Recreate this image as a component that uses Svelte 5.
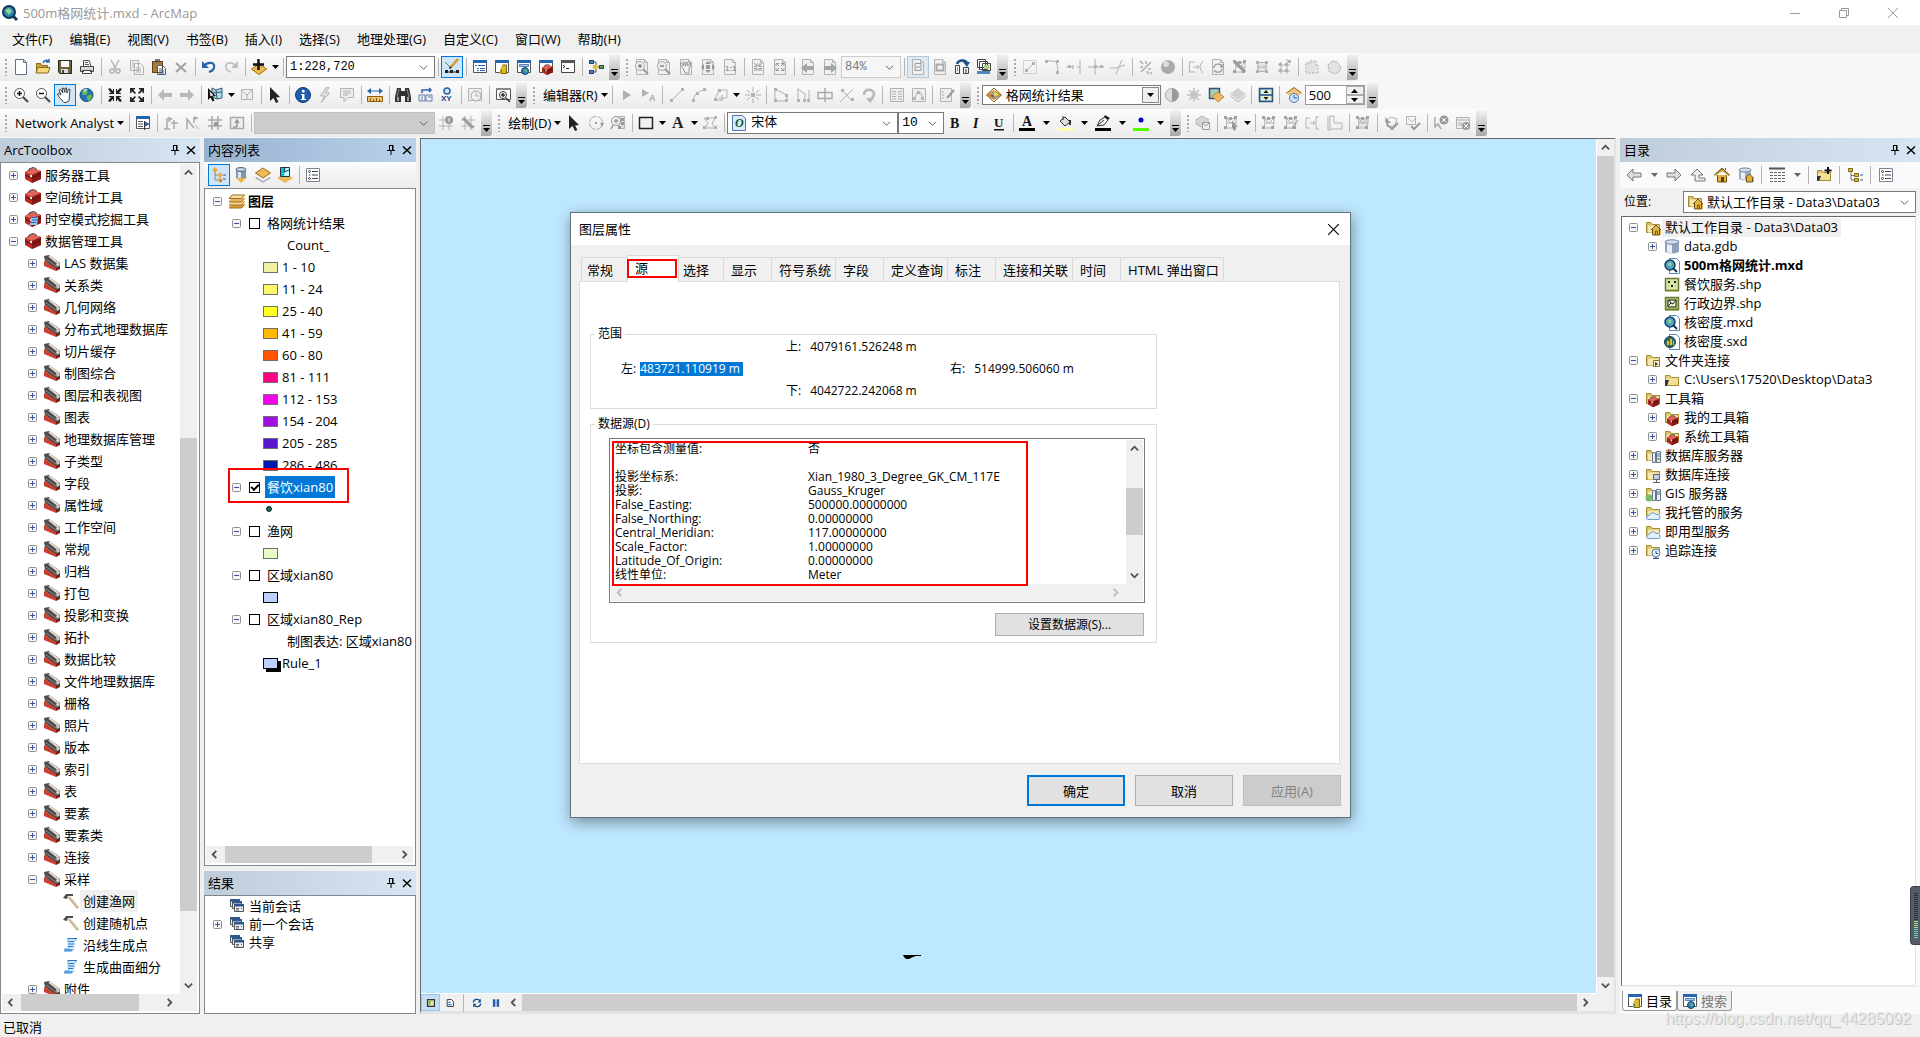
<script>
  const G = '#b2b2b2';
  const s = (d, c = G, w = 1) => `<path d="${d}" fill="none" stroke="${c}" stroke-width="${w}"/>`;
  const f = (d, c = G) => `<path d="${d}" fill="${c}"/>`;
  const page = f('M2.5.5h8l3 3v12h-11z', '#f0f0f0') + s('M2.5.5h8l3 3v12h-11zM10.500.5v3h3');
  const lens = (x) => `<circle cx="6.500" cy="6.500" r="5" fill="#fff" stroke="#555"/>` + s('M10 10l5 5', '#444', 2) + s('M4 6.500h5' + x, '#111', 1.500);
  const greyLens = (x) => page + `<circle cx="6" cy="7" r="4.500" fill="#eee" stroke="#aaa"/>` + s('M9 10l5 5', '#999', 2) + s('M4 7h4' + x, '#888', 1.500);
  const dots = (pts, c = G) => pts.map(([x, y]) => f(`M${x - 1} ${y - 1}h3v3h-3z`, c)).join('');
  const folder = f('M1 3h5l1.500 2H15v9H1z', '#e3c766') + f('M2 6h12v7H2z', '#f3df94') + s('M1.500 13.500v-10h4l2 2h7v8z', '#a58b35');
  const win = f('M1 2h14v12H1z', '#fff') + s('M1.500 2.500h13v11h-13z', '#555') + f('M1 1h14v3H1z', '#2564b0');
  const box = () => f('M0 5l7-4L16 4v8l-9 4-7-4z', '#b92b22') + f('M0 5l7-4L16 4 7 8z', '#df655a') + f('M7 8L16 4v8l-9 4z', '#861a14') + s('M4 4V2l4-1.500 3 1V3', '#444') + f('M5 8h2v3H5z', '#eee') + s('M0 8l7 3L16 7', '#5c0e0a');
  const globe = '<circle cx="7.500" cy="8" r="6.500" fill="#2373b5" stroke="#124a7c"/>' + f('M3 4l4-1 2 2-2 3-3 0zM8 9l4-2 1 3-3 4-2-2z', '#6fbb4a') + f('M4 3a5 5 0 0 1 5-1L6 5z', '#a8d8f5');
  const mxd = f('M5 .500h8l2.500 2.500v12.500H5z', '#fff') + s('M5.500.5h7l3 3v12h-10z', '#5a86b8') + '<circle cx="6" cy="7" r="5" fill="#4b9fc0" stroke="#16406b" stroke-width="1.500"/>' + f('M3 6l3-2 2 2-2 3z', '#8fd08e') + s('M9 10l4 4', '#17375c', 2);
  const mesh = s('M3 3l5 1 5-1v5l-1 5H3l1-5zM3 3l5 5 5-5M4 8h9') + dots([[2, 2], [7, 3], [12, 2], [2, 12], [11, 12]], '#a2a2a2');
  const fwin = (x) => f('M1 2h5l1.500 2H15v9H1z', '#dcc266') + s('M1.500 12.500v-10h4l2 2h7v8z', '#a58b35') + f('M3 5.500h11v7H3z', '#f7e9ae') + x;
  const layer = (c, y) => f(`M0 ${y}l8-5 8 5-8 5z`, c);
  const pane = (x, y) => f(`M${x} ${y}h10v8H${x}z`, '#e9edf2') + s(`M${x + 0.5} ${y + 0.5}h9v7h-9z`, '#555') + f(`M${x} ${y}h10v2.500H${x}z`, '#2f5788');

  const I = {
    new: f('M2.500.5h8l3 3v12h-11z', '#fff') + s('M2.500.5h8l3 3v12h-11zM10.500.5v3h3', '#607086'),
    open: f('M1 4h5l1 2h6v8H1z', '#c89d32') + f('M3 8h12l-2 6H1z', '#f6d877') + s('M1.500 14V4.500h4l2 2h5v2M3 8.500h12l-2 5.500H1z', '#8b6b1e') + s('M8 4c1-3 4-3 5-2M14 0v3h-3', '#2a65b0', 1.500),
    save: f('M1 1h14v14H3l-2-2z', '#6c6240') + f('M4 2h8v6H4z', '#f8f8f8') + f('M4 10h7v5H4z', '#ddd') + f('M5 11h2v3H5z', '#444') + s('M1.500 1.500h13v13H3l-1.500-2z', '#2f2b1a'),
    print: f('M1 7h14v6H1z', '#d8d8d8') + f('M4 1h7l2 6H3z', '#fff') + s('M1.500 7.500h13v5h-13zM4.500 7V1.500H10l2 5.500M3.500 11.500h9v3h-9z', '#444') + f('M5 12h6v2H5z', '#fff') + s('M6 3.500h3M6 5.500h4', '#555'),
    cut: s('M4 1l5 9M12 1L7 10', G, 1.500) + '<g fill="none" stroke="#b2b2b2" stroke-width="1.500"><circle cx="5" cy="12" r="2"/><circle cx="11" cy="12" r="2"/></g>',
    copy: f('M1 1h9v11H1z', '#eee') + s('M1.500 1.500h8v10h-8zM5.500 4.500h6l3 3v8h-9zM3 4h2M3 6h2M3 8h2M7 9h5M7 11h5M7 13h5'),
    paste: f('M1 2h11v12H1z', '#a87838') + f('M4 0h5v4H4z', '#777') + f('M6 6h6l3 3v6.500H6z', '#fff') + s('M1.500 2.500h10v11h-10z', '#5f4018') + s('M6.500 6.500h5l3 3v6h-8zM8 10h4M8 12h5M8 14h5', '#3e5d86'),
    del: s('M3 4l10 9M13 4L3 13', '#a2a2a2', 2),
    undo: s('M3 7c3-4 9-4 10-1s-1 6-5 7', '#2a62ad', 2.200) + f('M1 2v7h7z', '#2a62ad'),
    redo: s('M13 7C10 3 4 3 3 6s1 6 5 7', '#c0c0c0', 1.800) + f('M15 2v7H8z', '#c0c0c0'),
    add: f('M0 10l8-5 8 5-8 6z', '#eebb4d') + s('M.500 10l7.500-5 7.500 5-7.500 5.500z', '#a06d17') + s('M7.500 0v11M2 5.500h11', '#111', 2.500),
    edit: s('M2 13h4l4 0h4', '#222') + dots([[2, 12], [7, 12], [13, 12]], '#222') + s('M1 3l5 5 3-1', '#4c8d45') + s('M14 0L7 8', '#d39a2e', 2.500) + f('M6 7l-1 3 3-1z', '#222'),
    toc: win + s('M3 6.500h2M6 6.500h7M5 9.500h2M8 9.500h5M5 11.500h2M8 11.500h5', '#2b62a8'),
    cat: win + f('M8 6h5v9H6v-4z', '#dcb92f') + s('M8.500 6h4v8.500H7', '#7e6512') + f('M6 12l2-2v4z', '#468a3c'),
    search: win + f('M3 5h10v3H3z', '#a9c9e8') + s('M3.500 5.500h9v2h-9z', '#5a84b0') + '<circle cx="9" cy="12" r="3.500" fill="#3180b8" stroke="#15436f"/>' + f('M8 10l3 1-1 3z', '#84c15b'),
    tbx: win + '<g transform="translate(4 5) scale(.68)">' + box() + '</g>',
    py: f('M1 2h14v12H1z', '#fff') + s('M1.500 2.500h13v11h-13z', '#444') + f('M1 1h14v3H1z', '#555') + s('M3 6l2 1.500L3 9M6 9.500h3', '#222'),
    model: s('M4 3h4v10H4M8 8h5', '#555') + f('M1 1h5v4H1zM1 11h5v4H1z', '#3f7fd0') + f('M5 6h4l1 2-1 2H5z', '#e6bf39') + f('M11 6h5v4h-5z', '#5aa546') + s('M1.500 1.500h4v3h-4zM1.500 11.500h4v3h-4zM11.500 6.500h4v3h-4z', '#2a4360'),
    zin: lens('M6.500 4v5'), zout: lens(''),
    pan: f('M4 8L2 3l1.500-.500L6 6 5 1.500l1.500-.500L8 5.500V1l1.500 0L10 6l1.500-4 1.500.500L12.500 8l-.500 6-3 1.500H7L2 10 .500 7 2 6.500z', '#fff') + s('M4 8L2 3l1.500-.500L6 6 5 1.500l1.500-.500L8 5.500V1l1.500 0L10 6l1.500-4 1.500.500L12.500 8l-.500 6-3 1.500H7L2 10 .500 7 2 6.500z', '#444'),
    globe,
    fin: f('M1 2l2-1 3 3V2h1v5H2V6h2zM15 2l-2-1-3 3V2H9v5h5V6h-2zM1 14l2 1 3-3v2h1V9H2v1h2zM15 14l-2 1-3-3v2H9V9h5v1h-2z', '#222'),
    fout: f('M1 1h5v1.500H4L7 6 6 7 2.500 4v2H1zM15 1h-5v1.500h2L9 6l1 1 3.500-3v2H15zM1 15h5v-1.500H4L7 10 6 9l-3.500 3v-2H1zM15 15h-5v-1.500h2L9 10l1-1 3.500 3v-2H15z', '#222'),
    back: f('M1 8l6-6v4h8v4H7v4z', '#b8b8b8'), fwd: f('M15 8L9 2v4H1v4h8v4z', '#b8b8b8'),
    selfeat: f('M5 1l4 2 6-2v10l-5 1-5-1z', '#9be3f0') + s('M5 1l4 2 6-2v10l-5 1-5-2zM9 3l1 9M5 6l10-1', '#456') + f('M1 1l8 8-3.500.500 2 4-2 1-2-4L1 13z', '#111') + f('M2.500 4l4 4.500L3.500 9z', '#fff'),
    clrsel: f('M2 2h12v11H2z', '#eee') + s('M2.500 2.500h11v10h-11zM2 3l6 5 5-5M8 8v4'),
    arrow: f('M3 0l10 10-4 .500 2.500 4.500-2.500 1-2.500-5L3 14z', '#222'),
    info: '<circle cx="8" cy="8" r="7.500" fill="#1f5fae" stroke="#0d3b78"/>' + f('M7 3h2.500v2.500H7zM6 7h3.500v5H11v1H6v-1h1V8H6z', '#fff'),
    bolt: f('M9 0L3 9h4l-3 7 9-10H8.500L12 0z', '#e2e2e2') + s('M9.500.5L3.500 9H8l-4 6.500 8.500-9.500H8.500l3.500-5.500z'),
    popup: f('M2 2h13v9H9l-4 4v-4H2z', '#eee') + s('M1.500 1.500h13v9H9l-4 4v-4H1.500zM4 4h8M4 6h8M4 8h5'),
    measure: f('M0 9h16v6H0z', '#f0c36d') + s('M.500 9.500h15v5H.500zM3.500 11v3M6.500 12v2M9.500 11v3M12.500 12v2', '#8d5d14') + s('M2 4h12', '#2a62ad') + f('M0 4l4-3v6zM16 4l-4-3v6z', '#2a62ad'),
    binoc: f('M2 1h4v3h4V1h4l2 9v5h-6V9H6v6H0v-5z', '#333') + f('M2 10h2v4H2zM12 10h2v4h-2z', '#9a9a9a') + s('M4 2L2 10M12 2l2 8', '#888'),
    route: s('M2 8h6v6H2zM9 8h6v6H9zM4 10h2M11 10h3M4 12h2', '#5f7fa6') + s('M5 6V3h9M12 1l2 2-2 2', '#2a62ad', 1.500),
    xy: '<circle cx="8" cy="4" r="3" fill="#cfe4f7" stroke="#2a62ad" stroke-width="1.500"/><text x="2" y="14" font-size="8" font-weight="bold" font-family="Liberation Sans" fill="#174a8c">XY</text>',
    time: f('M1 1h13v13H1z', '#eee') + s('M1.500 1.500h13v12h-13z') + '<circle cx="9" cy="9" r="5" fill="#eee" stroke="#aaa"/>' + s('M9 6v3h3'),
    viewer: f('M1 1h14v11H1z', '#fff') + s('M1.500 1.500h14v11h-14z', '#555') + f('M1 1h15v2H1z', '#888') + '<circle cx="8" cy="8" r="3.500" fill="#fff" stroke="#333"/>' + s('M6 8h4M8 6v4M11 11l4 4', '#333', 1.500),
    lzin: greyLens('M6 5v4'), lzout: greyLens(''),
    lpan: page + s('M5 9L2 5l1-1 3 3-1-4h1l2 4V3h1l1 4 2-3 1 1-2 5v4H7z', '#999'),
    lfull: page + f('M8 2l3 3H5zM8 14l3-3H5zM1 8l3-3v6zM15 8l-3-3v6zM6 6h4v4H6z', '#999'),
    l11: page + '<text x="3" y="12" font-size="8" font-weight="bold" font-family="Liberation Sans" fill="#999">1:1</text>',
    lfin: page + s('M4 4l3 3M12 4L9 7M4 12l3-3M12 12L9 9M7 4.500v3H4M9 4.500v3h3M7 12V9.500H4M9 12V9.500h3', '#999'),
    lfout: page + s('M4 4l3 3M12 4L9 7M4 12l3-3M12 12L9 9M4 7V4.500h3M12 7V4.500H9M4 9v2.500h3M12 9v2.500H9', '#999'),
    lback: page + f('M1 9l6-5v3h7v4H7v3z', '#a4a4a4'), lfwd: page + f('M15 9L9 4v3H2v4h7v3z', '#a4a4a4'),
    draft: page + s('M5 4.500h6v7H5zM6 8h4', '#999'),
    focus: page + s('M4.500 5.500h7v6h-7z', '#aaa', 2),
    chgl: s('M3 5c1-4 8-5 10-1', '#1d5288', 2.500) + f('M9 3h7l-3 5z', '#1d5288') + f('M1 6h5v9H1zM9 8h6v7H9z', '#eee') + s('M1.500 6.500h4v8h-4zM9.500 8.500h5v6h-5zM3 9h1M3 11h1M11 11h2M11 13h2', '#444'),
    ddp: f('M1 1h9v8H1z', '#fff') + s('M1.500.5h8v8h-8zM3.500 2.500h8v8h-8zM6.500 4.500h8v7h-8z', '#444') + f('M8 6h5v4H8z', '#a8ce8c') + f('M1 12h13v3H1z', '#4f86c6'),
    e1: `<path d="M1.500 1.500h13v13h-13z" fill="none" stroke="#b2b2b2" stroke-dasharray="1 1"/>` + s('M4 12l8-8') + dots([[4, 11], [11, 4]]),
    e2: s('M3 2h8q3 3 3 12') + dots([[2, 2], [13, 2], [13, 13]]),
    e3: s('M0 8h8M6 6l2 2-2 2M14 1v14M11 8h3') + dots([[3, 7]]),
    e4: s('M0 8h16M7 0v16') + dots([[7, 7], [13, 7]]),
    e5: s('M0 9h6l9-3M12 1L6 15'),
    e6: s('M3 13l10-10M2 2l3 3M13 10l-3 0M9 12l1 3M2 8h3M8 2v3M12 13l2 2', '#aaa', 1.500),
    e7: '<circle cx="8" cy="8" r="7" fill="#aaa"/><circle cx="6" cy="5" r="3" fill="#dcdcdc"/>',
    e8: s('M1.500 3v10M1 3h6M1 13h6M15 2q-6 6 0 12M5 8h6M9 6l2 2-2 2'),
    e9: page + s('M4 9c0-5 7-5 8-1M10 8h3V5M12 10c0 4-7 4-8 1', '#a2a2a2', 1.500),
    e10: mesh + s('M3 3l10 10', '#999', 3),
    e11: f('M3 4h10v8H3z', '#e4e4e4') + s('M3 3.500h10M3 8h10M3 12.500h10M4 3v10M12 3v10') + dots([[3, 3], [12, 3], [3, 12], [12, 12]]),
    e12: s('M2 6h12M2 12h12M5 3v12M11 0v15') + dots([[4, 5], [10, 5], [4, 11], [10, 11], [13, 2]]),
    e13: f('M3 4l5-2 5 3v6l-4 3H3z', '#e2e2e2') + `<path d="M2 4h4V2h6v4h2v8H2z" fill="none" stroke="#aaa" stroke-dasharray="2 1"/>`,
    e14: `<path d="M2 6l4-4 5 1 4 5-2 5-5 2-5-3z" fill="#e2e2e2" stroke="#aaa" stroke-dasharray="2 1"/>`,
    play: f('M4 3v10l8-5z', '#b0b0b0'),
    playA: f('M1 2v8l7-4z', '#b0b0b0') + '<text x="8" y="14" font-size="9" font-weight="bold" font-family="Liberation Sans" fill="#aaa">A</text>',
    line: s('M2 14L14 2') + dots([[2, 13], [13, 2]]),
    arc: s('M2 14q1-9 11-11') + dots([[2, 13], [6, 6], [13, 2]]),
    trace: s('M2 13L6 3h8v8M2 13h8M9 8v6M6 11h7') + dots([[2, 12], [6, 3]]),
    burst: s('M8 0v5M8 11v5M0 8h5M11 8h5M2 3l3 3M14 3l-3 3M2 13l3-3M14 13l-3-3', G, 1) + f('M6 6h4v4H6z'),
    v1: s('M2 2v12h12V8L2 2') + dots([[2, 2], [2, 13], [13, 13], [13, 8]]),
    v2: s('M3 1v14M3 2l7 5v7M14 3v12') + dots([[3, 13], [9, 13], [13, 13]]),
    v3: s('M1 5.500h14v6H1zM8 1v14', '#aaa', 1.500),
    v4: s('M1 15L14 2M4 4l8 9') + dots([[3, 3], [13, 12]]),
    v5: s('M3 8c0-8 11-6 10 0-1 3-3 3-4 6', '#b8b8b8', 2.500) + f('M5 11h8l-4 5z', '#b8b8b8'),
    tab: f('M1 1h14v14H1z', '#eee') + s('M1.500 1.500h13v13h-13zM3 4.500h4M3 7h4M3 9.500h4M3 12h4M9 4.500h4M9 7h4M9 9.500h4M9 12h4'),
    sketch: f('M1 1h14v14H1z', '#eee') + s('M1.500 1.500h13v13h-13zM4 12l2-6h4l2 6') + dots([[3, 11], [11, 11], [7, 5]]),
    tmpl: f('M1 1h11v14H1z', '#eee') + s('M1.500 1.500h11v13h-11zM3 5h2M3 8h2M3 11h2') + s('M15 3l-7 8', '#999', 2),
    lyr: layer('#d9922b', 8) + f('M3 8l5-3.500L13 8l-5 3.500z', '#5bb0dd') + f('M8 4.500L13 8l-5 1z', '#f7e04d') + f('M3 8l5 0 0 3.500z', '#d8452f') + s('M.500 8L8 1l7.500 7L8 15z', '#8d5a17'),
    contrast: '<circle cx="8" cy="8" r="6.500" fill="#ddd" stroke="#aaa"/>' + f('M8 1.500a6.500 6.500 0 0 1 0 13z', '#999'),
    sun: '<circle cx="8" cy="8" r="4" fill="#c4c4c4"/>' + s('M8 1v3M8 12v3M1 8h3M12 8h3M3 3l2 2M11 11l2 2M13 3l-2 2M5 11l-2 2', '#c4c4c4', 1.500),
    transp: f('M1 1h11v11H1z', '#a9cdb4') + s('M1.500 1.500h10v10h-10z', '#35507a', 1.500) + f('M4 9l6-4 6 5-6 5z', '#eab765') + s('M4 9l6-4 6 5-6 5z', '#c08e3d'),
    diam: f('M0 7l8-6 8 6-8 6z', '#d2d2d2') + s('M.500 9L8 15l7.500-6'),
    swipe: f('M1 1h14v14H1z', '#a6d3f0') + s('M1.500 1.500h13v13h-13z', '#2b5080', 1.500) + f('M3 3h10v4H3zM3 9h10v4H3z', '#e8f2c8') + s('M1 8h14', '#2b5080', 1.500) + f('M8 3l2.500 3h-5zM8 13l2.500-3h-5z', '#111'),
    flick: f('M0 6l8-6 8 6-8 6z', '#eec27e') + s('M.500 6L8 .500 15.500 6', '#a06d17') + '<circle cx="8" cy="11" r="4.500" fill="#cfe4f7" stroke="#4b7db0"/>' + s('M8 8v3h3', '#2a62ad'),
    nawin: win + s('M3 6.500h5M3 9h5M3 11.500h5', '#555') + f('M9 6l6 3-6 3z', '#2a62ad') + s('M9.500 6v9', '#333'),
    n1: s('M1 14h6M4 3v11M8 8h7M11 5v9M6 2v5', '#aaa', 1.500) + f('M6 2l4 2-4 2z', '#aaa'),
    n2: s('M1 3l8 10M2 14V4M9 2v6', '#aaa', 1.500) + f('M9 1l5 2-5 2z', '#aaa') + s('M10 10l4 4'),
    n3: s('M1 5h14M1 11h14M5 1v14M11 1v14', '#aaa', 1.500) + f('M7 7h4v4H7z', '#999'),
    n4: f('M1 2h14v12H1z', '#eee') + s('M1.500 2.500h13v11h-13z', '#aaa', 1.500) + s('M8 12V6M6 8l2-3 2 3M4 12h4', '#999', 1.500),
    n5: s('M1 5h14M1 11h14M5 1v14M11 1v14') + '<circle cx="11" cy="5" r="4" fill="#999"/>' + f('M10.500 3h1v4h-1z', '#fff'),
    n6: s('M1 5h14M1 11h14M5 1v14M11 1v14') + s('M3 3l10 10', '#999', 3),
    rot: '<circle cx="8" cy="8" r="6.500" fill="none" stroke="#aaa" stroke-dasharray="9 1.500"/>' + f('M7 7h2v2H7zM12 8h4l-2 4z', '#999'),
    zsel: f('M8 1h7v13H8z', '#ddd') + s('M8.500 1.500h6v12h-6z') + '<circle cx="6" cy="6" r="4.500" fill="#eee" stroke="#999"/>' + s('M4 6h4M6 4v4M3 10l-2 4', '#999', 1.500) + dots([[12, 4], [12, 8], [9, 12]], '#999'),
    rect: f('M1 2h14v12H1z', '#f2f2f2') + s('M1.500 2.500h13v11h-13z', '#222', 1.500),
    A: '<text x="2" y="13" font-size="16" font-weight="bold" font-family="Liberation Serif" fill="#222">A</text>',
    vert: s('M2 3h6l5 0-3 6 4 4H3l3-5z') + dots([[2, 12], [13, 12], [13, 2], [5, 3]]),
    B: '<text x="3" y="13" font-size="14" font-weight="bold" font-family="Liberation Serif" fill="#111">B</text>',
    It: '<text x="4" y="13" font-size="14" font-weight="bold" font-style="italic" font-family="Liberation Serif" fill="#111">I</text>',
    U: '<text x="3" y="12" font-size="13" font-weight="bold" font-family="Liberation Serif" fill="#111">U</text>' + f('M3 14h10v1.500H3z', '#111'),
    cA: '<text x="3" y="11" font-size="14" font-weight="bold" font-family="Liberation Serif" fill="#111">A</text>' + f('M0 13h16v3H0z', '#000'),
    cFill: f('M3 6l5-4 5 5-5 4z', '#ddd') + s('M3 6l5-4 5 5-5 4zM6 5V1', '#333') + s('M13 5v5', '#333', 2) + f('M0 13h16v3H0z', '#ffffb4'),
    cPen: s('M2 11l3-6 5-3 3 3-4 5zM3 10l6-5', '#333') + f('M10 0l5 3-2 2-4-3z', '#222') + f('M0 13h16v3H0z', '#000'),
    cDot: '<circle cx="8" cy="5" r="2.500" fill="#0000d8"/>' + f('M0 13h16v3H0z', '#55ff00'),
    t1: f('M0 5l7-4 7 4v4l-7 4-7-4z', '#d6d6d6') + s('M.500 5L7 1l7 4M.500 8l6 4') + f('M7 7h8v8H7z', '#eee') + s('M7.500 7.500h7v7h-7zM8 8l3 3 3-3', '#999'),
    t2: mesh + f('M9 6l6 6h-3l1 3-2 1-1-3-1 1z', '#999'),
    mesh, t4: mesh + s('M8 14l7-9', '#999'),
    t5: s('M1 3v10M1 3h4M1 13h4M5 8h5M8 6l2 2-2 2M14 2h-3v12h3'),
    t6: s('M3 1h4v7h8v6H3z') + s('M1 1v14h3'),
    t7: f('M3 3h10v10H3z', '#e4e4e4') + mesh,
    t8: s('M2 6l6-4 6 2-2 6-5 2z') + f('M2 2l6 6H5l1 4-2 0z', '#999') + s('M6 11l3 3 6-6', '#999', 2),
    t9: s('M1.500 1.500h9v8h-9zM3 3l4 4 3-3') + s('M6 11l3 3 6-6', '#999', 2),
    t10: s('M2 2v10l3-3 3 5', '#aaa', 1.500) + '<circle cx="11" cy="5" r="4.500" fill="#999"/>' + s('M9 3l4 4M13 3L9 7', '#fff'),
    t11: f('M1 2h13v12H1z', '#eee') + s('M1.500 2.500h13v11h-13zM1 5h14M3 8h4M3 10h4') + '<circle cx="11" cy="11" r="4" fill="#999"/>' + s('M9 9l4 4M13 9l-4 4', '#fff'),
    // contents panel
    cDraw: s('M4 4v9h6M4 8h5', '#888') + f('M1 3l3-3 3 3-3 3zM6 8l3-3 3 3-3 3zM6 13l3-3 3 3-3 3z', '#e3ae51') + s('M12 8h3M12 12h3M9 14h2', '#2a62ad'),
    cSrc: f('M2 10h12l-6 6z', '#e9b34a') + f('M3 2h10v9H3z', '#8196b3') + f('M5 2h3v9H5z', '#dce6f2') + '<ellipse cx="8" cy="2.500" rx="5" ry="2" fill="#c6d3e4" stroke="#50627c"/>',
    cVis: layer('#aeb4b8', 11) + layer('#f5f5f5', 9) + layer('#edba57', 6) + s('M.500 6L8 1l7.500 5L8 11z', '#9c6d1b'),
    cSel: layer('#edba57', 11) + f('M3 0h10v10H3z', '#bff') + f('M4 1h4l-1 8H4z', '#14b9d6') + s('M3.500.5h9v9h-9zM8 1L7 5l5-2', '#234'),
    opts: f('M1 1h14v14H1z', '#fff') + s('M1.500 1.500h13v13h-13z', '#7a8591') + s('M7 4.500h6M7 8h6M7 11.500h6', '#445') + '<g fill="none" stroke="#445"><circle cx="4.500" cy="4.500" r="1"/><circle cx="4.500" cy="11.500" r="1"/></g>' + f('M4 7.500h1.500v1H4z', '#445'),
    layers: f('M0 14l3-3h13l-3 4H0z', '#d99b35') + f('M0 11l3-3h13l-3 4H0z', '#f5d795') + f('M0 8l3-3h13l-3 4H0z', '#e6b457') + f('M0 5l3-3h13l-3 4H0z', '#f8dea4') + s('M0 5.500l3-3.500h12.500l-3 3.500zM0 9h12.500l3-3.500M0 12h12.500l3-3.500M0 15h12.500l3-3.500', '#a06f20'),
    // trees
    toolbox: box(),
    toolboxS: box() + f('M6 6h7l-1 8H4l2-3z', '#8cc4f0') + s('M6 6.500h6M7 9h5M6 11.500h5', '#2a6ab0'),
    toolset: f('M0 6l12 5v5L0 11z', '#c8402f') + f('M0 6l4-1 9 6-1 1z', '#ea7f70') + f('M12 11l4-1v4l-4 2z', '#7d1d15') + f('M0 1l5-1 11 8v4l-4 1L1 6z', '#4b4b4b') + s('M5 1l10 8', '#e6ddd0', 2) + s('M2 4l10 7', '#8c8c8c') + f('M12 9l3-1 1 2-3 2z', '#d8cdbb'),
    hammer: s('M6 4l9 11', '#b99f77', 2.500) + s('M6.500 4l8 10', '#efe2c8', 1) + f('M0 5l3-4 7 0 0 2-5 0-1 3z', '#4f4f4f'),
    script: f('M4 1h10l-1 3h-1l-1 9-3 2H1l1-4h3z', '#8ec5f2') + f('M6 2h6l-1 10H6z', '#cfe8fc') + s('M5 1.500h9M6 4.500h5M6 7h5M5 9.500h5M1 13h8', '#2d72bb', 1.200),
    session: pane(1, 1) + pane(3, 3) + pane(5, 6) + s('M7 10.500h3M7 12h3M12 10.500h1', '#666'),
    house: fwin(f('M6 10l5-5 5 5v5H7v-5z', '#e3b843') + s('M6 10l5-5 5 5M7.500 9v6h7V9M10.500 15v-4h2v4', '#6f531a')),
    gdb: f('M1 3h14v10q-7 3-14 0z', '#8fa3bd') + f('M3 3h5v11.500l-5-1z', '#e8eef6') + '<ellipse cx="8" cy="3" rx="7" ry="2.200" fill="#d4deeb" stroke="#6d819d"/>',
    mxd,
    shpPt: f('M1 1h14v14H1z', '#d6e3a0') + s('M1.500 1.500h13v12h-13z', '#68793a', 1.500) + f('M4 4h2v2H4zM10 4h2v2h-2zM7 8h2v2H7z', '#222'),
    shpPg: f('M1 1h14v14H1z', '#b9cb74') + s('M1.500 1.500h13v12h-13z', '#68793a', 1.500) + f('M4 4h8v7H4z', '#eef4d0') + s('M4 4h8v7H4zM4 10l3-3 2 1 3-4M7 7l-2-3', '#222'),
    sxd: f('M5 .500h8l2.500 2.500v12.500H5z', '#fff') + s('M5.500.5h7l3 3v12h-10z', '#5a86b8') + '<circle cx="6" cy="8" r="5.500" fill="#2e6f5a" stroke="#163c55"/>' + f('M3 7h2v4H3zM6 5h2v6H6zM9 7h1v4H9z', '#e8c23c'),
    fcon: fwin(f('M8 7h6v7H8z', '#fbf3cf') + s('M8.500 7.500h6v6h-6z', '#8b7328') + f('M10 9l3 2-3 2z', '#333')),
    fold: folder + f('M1 8h4l-2 6H1z', '#333'),
    ftbx: fwin('<g transform="translate(3 5) scale(.7)">' + box() + '</g>'),
    fserv: fwin(f('M7 4h8v11H7z', '#e5ecf4') + s('M7.500 4.500h3v10h-3zM11.500 3.500h4v11h-4zM12 6h3M12 8h3', '#64748b') + f('M12.500 10h2v2h-2z', '#4ea63e')),
    fdb: fwin(f('M8 7h7v6H8z', '#c3cfde') + s('M8.500 7.500h6v5h-6zM11.500 13v2M8 15.500h7', '#55657c')),
    fgis: fwin(f('M7 4h8v11H7z', '#e5ecf4') + s('M7.500 4.500h3v10h-3zM11.500 3.500h4v11h-4zM12 6h3M12 8h3', '#64748b') + '<circle cx="4" cy="12" r="3.500" fill="#7cb86b"/>'),
    fcloud: fwin(f('M3 15a3 3 0 0 1 1-5 4 4 0 0 1 7-1 3 3 0 0 1 3 6z', '#e3f0fb') + s('M3 14.500a2 2 0 0 1 1-4 4 4 0 0 1 7-1 3 3 0 0 1 3 5z', '#6e9bc4')),
    ftrack: fwin('<circle cx="11" cy="10" r="4" fill="#e3f0fb" stroke="#4b7db0"/>' + s('M11 8v2.500h2M11 14v2M8 15.500h6', '#345')),
    // catalog toolbar
    cback: f('M1 8l6-6v4h8v4H7v4z', '#ddd') + s('M1 8l6-6v4h8v4H7v4z', '#777'),
    cfwd: f('M15 8L9 2v4H1v4h8v4z', '#ddd') + s('M15 8L9 2v4H1v4h8v4z', '#777'),
    cup: f('M7 2l6 6H9v3h6v3H5V8H1z', '#eee') + s('M7 2l6 6H9v3h6v3H5V8H1z', '#777'),
    home: f('M3 8h10v7H3z', '#e2b23e') + f('M0 8l8-7 8 7-1 1-7-5-7 5z', '#c1912b') + s('M3.500 8v7h9V8M.500 8L8 1l7.500 7M11.500 3V1', '#6f531a') + f('M7 10h3v5H7z', '#5b4012'),
    hdb: f('M1 3h12v9q-6 3-12 0z', '#9db0c8') + f('M3 3h4v10l-4-1z', '#e8eef6') + '<ellipse cx="7" cy="3" rx="6" ry="2" fill="#d4deeb" stroke="#6d819d"/>' + f('M7 11l4-4 5 4v4H8v-4z', '#dfb03f') + s('M7 11l4.500-4 4 4M8.500 11v4h6v-4', '#6f531a'),
    list: s('M0 1.500h16', '#555', 2) + `<path d="M1 5.500h15M1 8.500h15M1 11.500h15M1 14.500h15" stroke="#666" stroke-dasharray="3 1" fill="none"/>`,
    fadd: folder + f('M1 9h4l-2 5H1z', '#333') + s('M12 0v7M8.500 3.500h7', '#111', 2),
    ctree: s('M4 5v8h4M4 8.500h4', '#777') + f('M1 1h5v4H1zM7 6h5v4H7zM7 11h5v4H7z', '#d9b845') + s('M1.500 1.500h4v3h-4zM7.500 6.500h4v3h-4zM7.500 11.500h4v3h-4z', '#7f671c') + s('M13 8h3M13 13h3', '#2a62ad'),
    dview: f('M2 2h12v12H2z', '#dfe9b8') + s('M2.500 2.500h11v11h-11z', '#333', 2) + f('M4 4l5 0-3 8H4z', '#8fb94e'),
    lview: f('M3 2h8l3 3v9H3z', '#fff') + s('M3.500 2.500h7l3 3v8h-10z', '#333', 1.500) + s('M5 7h4M5 10.500h6', '#3f7fd0', 2),
    refresh: s('M2 7c1-6 9-6 11-2M14 9c-1 6-9 6-11 2', '#124a8c', 2) + f('M14 1v6H9zM2 15V9h5z', '#124a8c'),
    pause: f('M3 2h4v12H3zM9 2h4v12H9z', '#1f5fae'),
    app: '<circle cx="7" cy="7" r="6" fill="#2a86a8" stroke="#123a5c" stroke-width="2"/>' + f('M3 5l4-2 3 3-3 4-2-2z', '#8fd08e') + s('M11 11l4 4', '#123a5c', 3),
  };

  const split = (t) => t.split(' ').map((k) => (k.endsWith('>>') ? { i: k.slice(0, -2), a: 2 } : k.endsWith('>') ? { i: k.slice(0, -1), a: 1 } : { i: k }));
  const menus = ['文件(F)', '编辑(E)', '视图(V)', '书签(B)', '插入(I)', '选择(S)', '地理处理(G)', '自定义(C)', '窗口(W)', '帮助(H)'];
  const toolRows = [
    [
      [...split('new open save print | cut copy paste del | undo redo | add> |'), { sel: '1:228,720', c: 'scale', l: '比例' }, ...split('| *edit | toc cat search tbx py | model')],
      [...split('lzin lzout lpan lfull l11 | lfin lfout | lback lfwd'), { sel: '84%', c: 'pct', l: '缩放', off: true }, ...split('| *draft focus chgl ddp')],
      split('e1 e2 e3 e4 e5 | e6 e7 | e8 e9 e10 e11 e12 | e13 e14'),
    ],
    [
      split('zin zout *pan globe | fin fout | back fwd | selfeat> clrsel | arrow | info bolt popup | measure | binoc route xy | time | viewer'),
      [{ txt: '编辑器(R)' }, ...split('| play playA | line arc trace> burst | v1 v2 v3 v4 v5 | tab sketch | tmpl')],
      [{ sel: '格网统计结果', c: 'lyrsel', l: '图层', ic: 'lyr' }, ...split('contrast sun transp diam | swipe | flick'), { spin: '500' }],
    ],
    [
      [{ txt: 'Network Analyst' }, ...split('| nawin | n1 n2 n3 n4 |'), { sel: '', c: 'dead', l: '网络数据集', off: true }, ...split('n5 n6')],
      [{ txt: '绘制(D)' }, ...split('arrow rot zsel | rect> A> vert |'), { sel: '宋体', c: 'font', l: '字体', fo: true }, { sel: '10', c: 'size', l: '字号' }, ...split('B It U | cA>> cFill>> cPen>> cDot>>')],
      split('t1 | t2> | mesh t4 t5 t6 | t7 | t8 t9 | t10 t11'),
    ],
  ];

  const toolTree = [
    ...['服务器工具', '空间统计工具', '时空模式挖掘工具', '数据管理工具'].map((t, k) => ({ t, d: 0, i: k === 2 ? 'toolboxS' : 'toolbox', x: k === 3 ? '-' : '+' })),
    ...'LAS 数据集,关系类,几何网络,分布式地理数据库,切片缓存,制图综合,图层和表视图,图表,地理数据库管理,子类型,字段,属性域,工作空间,常规,归档,打包,投影和变换,拓扑,数据比较,文件地理数据库,栅格,照片,版本,索引,表,要素,要素类,连接,采样'.split(',').map((t) => ({ t, d: 1, i: 'toolset', x: t === '采样' ? '-' : '+' })),
    { t: '创建渔网', d: 2, i: 'hammer', hl: true }, { t: '创建随机点', d: 2, i: 'hammer' },
    { t: '沿线生成点', d: 2, i: 'script' }, { t: '生成曲面细分', d: 2, i: 'script' },
    { t: '附件', d: 1, i: 'toolset', x: '+' },
  ];
  const catalog = [
    { t: '默认工作目录 - Data3\\Data03', d: 0, i: 'house', x: '-', hl: true },
    { t: 'data.gdb', d: 1, i: 'gdb', x: '+' }, { t: '500m格网统计.mxd', d: 1, i: 'mxd', b: true },
    { t: '餐饮服务.shp', d: 1, i: 'shpPt' }, { t: '行政边界.shp', d: 1, i: 'shpPg' },
    { t: '核密度.mxd', d: 1, i: 'mxd' }, { t: '核密度.sxd', d: 1, i: 'sxd' },
    { t: '文件夹连接', d: 0, i: 'fcon', x: '-' }, { t: 'C:\\Users\\17520\\Desktop\\Data3', d: 1, i: 'fold', x: '+' },
    { t: '工具箱', d: 0, i: 'ftbx', x: '-' }, { t: '我的工具箱', d: 1, i: 'ftbx', x: '+' }, { t: '系统工具箱', d: 1, i: 'ftbx', x: '+' },
    { t: '数据库服务器', d: 0, i: 'fserv', x: '+' }, { t: '数据库连接', d: 0, i: 'fdb', x: '+' }, { t: 'GIS 服务器', d: 0, i: 'fgis', x: '+' },
    { t: '我托管的服务', d: 0, i: 'fcloud', x: '+' }, { t: '即用型服务', d: 0, i: 'fcloud', x: '+' }, { t: '追踪连接', d: 0, i: 'ftrack', x: '+' },
  ];
  const results = [{ t: '当前会话', d: 0, i: 'session' }, { t: '前一个会话', d: 0, i: 'session', x: '+' }, { t: '共享', d: 0, i: 'session' }];
  const classes = [['#f2f0a1', '1 - 10'], ['#fcf66a', '11 - 24'], ['#ffff22', '25 - 40'], ['#ffb700', '41 - 59'], ['#ff5500', '60 - 80'], ['#fa0584', '81 - 111'], ['#f205e6', '112 - 153'], ['#a010e0', '154 - 204'], ['#5a18cc', '205 - 285'], ['#0219ad', '286 - 486']];
  const tabs = ['常规', '源', '选择', '显示', '符号系统', '字段', '定义查询', '标注', '连接和关联', '时间', 'HTML 弹出窗口'];
  const extent = [['上:', '4079161.526248 m', 'top'], ['左:', '483721.110919 m', 'left'], ['右:', '514999.506060 m', 'right'], ['下:', '4042722.242068 m', 'bottom']];
  const source = [['坐标包含测量值:', '否'], ['', ''], ['投影坐标系:', 'Xian_1980_3_Degree_GK_CM_117E'], ['投影:', 'Gauss_Kruger'], ['False_Easting:', '500000.00000000'], ['False_Northing:', '0.00000000'], ['Central_Meridian:', '117.00000000'], ['Scale_Factor:', '1.00000000'], ['Latitude_Of_Origin:', '0.00000000'], ['线性单位:', 'Meter']];
</script>

{#snippet icon(n)}<svg class="ico" viewBox="0 0 16 16" aria-hidden="true">{@html I[n]}</svg>{/snippet}

{#snippet chev(dir)}<svg class="chev {dir}" viewBox="0 0 10 10" aria-hidden="true"><path d="M1 7l4-4 4 4" fill="none" stroke="currentColor" stroke-width="2" /></svg>{/snippet}

{#snippet scroll(kind, before, thumb, after)}
  <div class="scroll {kind}" class:off={!thumb}>
    <button aria-label="向前滚动">{@render chev(kind === 'v' ? 'up' : 'left')}</button>
    <span style:flex-grow={before}></span>
    {#if thumb}<span class="thumb" style:flex-grow={thumb}></span>{/if}
    <span style:flex-grow={after}></span>
    <button aria-label="向后滚动">{@render chev(kind === 'v' ? 'down' : 'right')}</button>
  </div>
{/snippet}

{#snippet head(title, active)}
  <header class="head" class:active>
    <h2>{title}</h2>
    <button aria-label="固定"><svg viewBox="0 0 10 10"><path d="M3.500 0v5.500M7 0v5.500M3 .500h4M1 5.500h8M5 6v4M6.500 0v5" fill="none" stroke="#000" /></svg></button>
    <button aria-label="关闭"><svg viewBox="0 0 10 10"><path d="M1 1.500l8 7.500M9 1.500L1 9" fill="none" stroke="#000" stroke-width="1.500" /></svg></button>
  </header>
{/snippet}

{#snippet exp(x)}
  <span class="slot">
    {#if x}
      <button class="exp" aria-label={x === '+' ? '展开' : '折叠'}><svg viewBox="0 0 9 9"><rect x=".5" y=".5" width="8" height="8" rx="1" fill="#f4f4f4" stroke="#919191" /><path d={x === '+' ? 'M2 4.500h5M4.500 2v5' : 'M2 4.500h5'} stroke="#3b52a5" /></svg></button>
    {/if}
  </span>
{/snippet}

{#snippet tree(rows)}
  <ul class="tree">
    {#each rows as r}
      <li class="row d{r.d}">
        {@render exp(r.x)}
        <span class="slot">{@render icon(r.i)}</span>
        <span class="lbl" class:hl={r.hl} class:bold={r.b}>{r.t}</span>
      </li>
    {/each}
  </ul>
{/snippet}

{#snippet drop()}<svg class="drop" viewBox="0 0 7 4" aria-hidden="true"><path d="M0 0h7L3.500 4z" fill="currentColor" /></svg>{/snippet}

<div class="app">
  <div class="title">
    {@render icon('app')}
    <h1>500m格网统计.mxd - ArcMap</h1>
    <div class="wctl">
      <button aria-label="最小化"><svg viewBox="0 0 10 10"><path d="M0 5.500h10" stroke="#999" /></svg></button>
      <button aria-label="还原"><svg viewBox="0 0 10 10"><path d="M.5 2.500h7v7h-7zM2.500 2V.5h7v7H8" fill="none" stroke="#999" /></svg></button>
      <button aria-label="关闭窗口"><svg viewBox="0 0 10 10"><path d="M0 0l10 10M10 0L0 10" stroke="#999" /></svg></button>
    </div>
  </div>
  <nav class="menu">
    {#each menus as m}<button>{m}</button>{/each}
  </nav>
  <div class="bars">
    {#each toolRows as row}
      <div class="barrow">
        {#each row as bar}
          <div class="bar" role="toolbar">
            <span class="grip"></span>
            {#each bar as b}
              {#if b.i === '|'}
                <span class="sep"></span>
              {:else if b.i}
                <button class="tb" class:on={b.i[0] === '*'} class:dim={b.i === '*draft'} aria-label={b.i}>{@render icon(b.i.replace('*', ''))}</button>
                {#if b.a}<button class="ar" class:wide={b.a === 2} aria-label="更多">{@render drop()}</button>{/if}
              {:else if b.txt}
                <button class="txt">{b.txt}{@render drop()}</button>
              {:else if b.spin}
                <span class="spin">
                  <input aria-label="闪烁间隔" value={b.spin} />
                  <span class="ud"><button aria-label="增加">{@render drop()}</button><button aria-label="减少">{@render drop()}</button></span>
                </span>
              {:else}
                <span class="combo {b.c}" class:off={b.off}>
                  {#if b.ic}{@render icon(b.ic)}{/if}
                  {#if b.fo}<svg class="ico" viewBox="0 0 16 16"><path d="M1.500.5h10l3 3v12h-13z" fill="#dceafa" stroke="#4a78b5" /><text x="4" y="12" font-size="12" font-weight="bold" font-style="italic" font-family="Liberation Serif" fill="#0a5a2a">O</text></svg>{/if}
                  <select aria-label={b.l} disabled={b.off}><option>{b.sel}</option></select>
                  {#if b.ic}<span class="oldbtn">{@render drop()}</span>{:else}{@render chev('thin down')}{/if}
                </span>
              {/if}
            {/each}
            <button class="ovf" aria-label="工具栏选项"><svg viewBox="0 0 7 7"><path d="M0 .500h7" stroke="#000" /><path d="M0 3h7L3.500 7z" fill="#000" /></svg></button>
          </div>
        {/each}
      </div>
    {/each}
  </div>

  <main>
    <section class="panel tools">
      {@render head('ArcToolbox', false)}
      <div class="box">
        <div class="view">
          {@render tree(toolTree)}
          {@render scroll('v', 257, 472, 66)}
        </div>
        <div class="hrow">{@render scroll('h', 2, 119, 22)}</div>
      </div>
    </section>

    <div class="mid">
      <section class="panel contents">
        {@render head('内容列表', true)}
        <div class="ctools">
          <button class="tb on" aria-label="按绘制顺序列出">{@render icon('cDraw')}</button>
          <button class="tb" aria-label="按源列出">{@render icon('cSrc')}</button>
          <button class="tb" aria-label="按可见性列出">{@render icon('cVis')}</button>
          <button class="tb" aria-label="按选择列出">{@render icon('cSel')}</button>
          <span class="sep"></span>
          <button class="tb" aria-label="选项">{@render icon('opts')}</button>
        </div>
        <div class="box">
          <ul class="tree layers">
            <li class="row d0">{@render exp('-')}<span class="slot">{@render icon('layers')}</span><span class="lbl bold">图层</span></li>
            <li class="row d1">{@render exp('-')}<label><input type="checkbox" /><span class="lbl">格网统计结果</span></label></li>
            <li class="row sub">Count_</li>
            {#each classes as [c, t]}
              <li class="row leg"><i class="sw" style:background={c}></i>{t}</li>
            {/each}
            <li class="row d1 marked">{@render exp('-')}<label><input type="checkbox" checked /><span class="lbl sel">餐饮xian80</span></label></li>
            <li class="row leg"><svg class="pt" viewBox="0 0 6 6"><circle cx="3" cy="3" r="2.400" fill="#0a7c6c" stroke="#000" /></svg></li>
            <li class="row d1">{@render exp('-')}<label><input type="checkbox" /><span class="lbl">渔网</span></label></li>
            <li class="row leg"><i class="sw green"></i></li>
            <li class="row d1">{@render exp('-')}<label><input type="checkbox" /><span class="lbl">区域xian80</span></label></li>
            <li class="row leg"><i class="sw blue"></i></li>
            <li class="row d1">{@render exp('-')}<label><input type="checkbox" /><span class="lbl">区域xian80_Rep</span></label></li>
            <li class="row sub">制图表达: 区域xian80</li>
            <li class="row leg"><i class="sw blue shade"></i>Rule_1</li>
          </ul>
          {@render scroll('h', 2, 147, 24)}
        </div>
      </section>
      <section class="panel results">
        {@render head('结果', false)}
        <div class="box">{@render tree(results)}</div>
      </section>
    </div>

    <section class="mapwrap">
      <div class="mapline">
        <div class="map">
          <svg class="shape" viewBox="0 0 18 4" aria-label="要素"><path d="M0 0h18v1h-5l-3 1-4 2H3L1 2z" fill="#000" /></svg>
        </div>
        {@render scroll('v', 0, 1, 0)}
      </div>
      <div class="mapbot">
        <button class="mini on" aria-label="数据视图">{@render icon('dview')}</button>
        <button class="mini" aria-label="布局视图">{@render icon('lview')}</button>
        <span class="sep"></span>
        <button class="mini" aria-label="刷新">{@render icon('refresh')}</button>
        <button class="mini" aria-label="暂停">{@render icon('pause')}</button>
        {@render scroll('h', 0, 1, 0)}
      </div>
    </section>

    <section class="panel catalog">
      {@render head('目录', false)}
      <div class="cattools">
        <button class="tb" aria-label="后退">{@render icon('cback')}</button><button class="ar wide" aria-label="历史">{@render drop()}</button>
        <button class="tb" aria-label="前进">{@render icon('cfwd')}</button>
        <button class="tb" aria-label="向上">{@render icon('cup')}</button>
        <button class="tb" aria-label="主目录">{@render icon('home')}</button>
        <button class="tb" aria-label="默认数据库">{@render icon('hdb')}</button>
        <span class="sep"></span>
        <button class="tb" aria-label="视图">{@render icon('list')}</button><button class="ar wide" aria-label="视图选项">{@render drop()}</button>
        <span class="sep"></span>
        <button class="tb" aria-label="连接到文件夹">{@render icon('fadd')}</button>
        <span class="sep"></span>
        <button class="tb" aria-label="切换目录树">{@render icon('ctree')}</button>
        <span class="sep"></span>
        <button class="tb" aria-label="目录选项">{@render icon('opts')}</button>
      </div>
      <div class="loc">
        <label for="loc">位置:</label>
        <span class="combo">
          {@render icon('house')}
          <select id="loc"><option>默认工作目录 - Data3\Data03</option></select>
          {@render chev('thin down')}
        </span>
      </div>
      <div class="box">{@render tree(catalog)}</div>
      <div class="ctabs">
        <button class="cur">{@render icon('cat')}目录</button>
        <button>{@render icon('search')}搜索</button>
      </div>
    </section>
  </main>

  <footer>已取消</footer>

  <div class="dialog" role="dialog" aria-label="图层属性">
    <div class="dtitle">
      <h2>图层属性</h2>
      <button aria-label="关闭对话框"><svg viewBox="0 0 10 10"><path d="M0 0l10 10M10 0L0 10" stroke="#000" /></svg></button>
    </div>
    <div class="tabs" role="tablist">
      {#each tabs as t, k}<button role="tab" aria-selected={k === 1} class:cur={k === 1}>{t}</button>{/each}
    </div>
    <div class="page">
      <fieldset class="ext">
        <legend>范围</legend>
        <div class="grid">
          {#each extent as [l, v, k]}
            <label class={k}>{l}<input readonly value={v} /></label>
          {/each}
        </div>
      </fieldset>
      <fieldset class="src">
        <legend>数据源(D)</legend>
        <div class="text">
          <div class="view">
            <table>
              <tbody>
                {#each source as [a, b]}<tr><td>{a}</td><td>{b}</td></tr>{/each}
              </tbody>
            </table>
            {@render scroll('v', 31, 47, 32)}
          </div>
          <div class="hrow">{@render scroll('h', 1, 0, 1)}</div>
        </div>
        <button class="btn">设置数据源(S)...</button>
      </fieldset>
    </div>
    <div class="actions">
      <button class="btn ok">确定</button>
      <button class="btn">取消</button>
      <button class="btn" disabled>应用(A)</button>
    </div>
  </div>

  <div class="meter"><svg viewBox="0 0 4 46"><path d="M2 0v28" stroke="#2c303a" stroke-width="4" stroke-dasharray="1 1" /><path d="M2 28v8" stroke="#a9e08a" stroke-width="4" stroke-dasharray="1 1" /><path d="M2 36v10" stroke="#5fd3b4" stroke-width="4" stroke-dasharray="1 1" /></svg></div>
  <div class="mark">https://blog.csdn.net/qq_44285092</div>
</div>

<style>
  .app {
    height: 100vh;
    display: flex;
    flex-direction: column;
    position: relative;
    overflow: hidden;
    background: #f0f0f0;
    color: #000;
    font: 13px/16px 'Open Sans', 'Noto Sans CJK SC', sans-serif;
  }
  *, *::after { box-sizing: border-box; }
  button, input, select { font: inherit; color: inherit; }
  button { border: 0; padding: 0; background: none; display: flex; align-items: center; justify-content: center; }
  h1, h2, ul { margin: 0; padding: 0; font-size: 13px; font-weight: 400; list-style: none; }
  select { appearance: none; border: 0; background: none; padding: 0; outline: 0; opacity: 1; }
  svg { display: block; flex: none; }
  .ico { width: 16px; height: 16px; overflow: visible; }
  .chev { width: 9px; height: 9px; color: #505050; }
  .chev.down { transform: rotate(180deg); }
  .chev.left { transform: rotate(-90deg); }
  .chev.right { transform: rotate(90deg); }
  .chev.thin path { stroke-width: 1; }
  .drop { width: 7px; height: 4px; }

  .title { height: 25px; background: #fff; display: flex; align-items: center; gap: 5px; padding: 0 3px 0 2px; color: #999; }
  h1 { flex: 1; }
  .wctl { display: flex; }
  .wctl button { width: 49px; height: 22px; }
  .wctl svg { width: 10px; height: 10px; }
  .menu { display: flex; height: 28px; padding: 0 4px; gap: 1px; }
  .menu button { padding: 0 8px; }

  .bars { background: #f7f7f7; padding-bottom: 1px; }
  .barrow { display: flex; height: 28px; gap: 1px; }
  .bar { display: flex; align-items: center; background: linear-gradient(#fcfcfc, #ebebeb); border-radius: 3px; }
  .grip { width: 10px; height: 18px; background: radial-gradient(circle, #aaa 1px, transparent 1px) 2px 0 / 8px 4px repeat-y; }
  .sep { width: 6px; height: 18px; background: linear-gradient(#b5b5b5, #b5b5b5) center / 1px 100% no-repeat; }
  .tb { width: 22px; height: 22px; }
  .tb.on { background: #cfe6f8; border: 1px solid #0078d7; }
  .tb.dim { background: #e0e8f0; border-color: #b4c8da; }
  .ar { width: 10px; height: 22px; }
  .ar.wide { width: 16px; }
  .txt { padding: 0 2px 0 5px; gap: 3px; }
  .ovf { width: 11px; height: 26px; margin-left: 2px; align-items: flex-end; padding-bottom: 4px; background: linear-gradient(#f3f3f3, #a8a8a8); border-radius: 0 3px 3px 0; }
  .ovf svg { width: 7px; height: 7px; }
  .combo { display: flex; align-items: center; height: 22px; background: #fff; border: 1px solid #7a7a7a; padding: 0 6px 0 3px; gap: 4px; font: 13px/16px 'Liberation Mono', 'Noto Sans CJK SC', monospace; }
  .combo select { flex: 1; min-width: 0; height: 20px; }
  .scale { width: 149px; font-size: 12px; }
  .pct { width: 60px; font-size: 12px; }
  .combo.off { border-color: #ccc; color: #777; background: #f6f6f6; }
  .combo.dead { width: 181px; background: #ccc; border-color: #bfbfbf; }
  .font { width: 171px; }
  .size { width: 46px; }
  .lyrsel { width: 179px; padding-right: 1px; height: 20px; font-family: 'Open Sans', 'Noto Sans CJK SC', sans-serif; }
  .oldbtn { width: 17px; height: 16px; display: grid; place-items: center; background: #f0f0f0; border: 1px solid #888; }
  .spin { display: flex; width: 60px; height: 20px; border: 1px solid #999; background: #fff; }
  .spin input { width: 40px; border: 0; padding: 0 3px; background: none; }
  .ud { display: flex; flex-direction: column; width: 18px; }
  .ud button { flex: 1; border: 1px solid #aaa; background: #f0f0f0; }
  .ud button:first-child svg { transform: rotate(180deg); }

  main { flex: 1; min-height: 0; display: grid; grid-template-columns: 200px 212px minmax(0, 1fr) 300px; column-gap: 4px; }
  .panel { display: flex; flex-direction: column; min-height: 0; min-width: 0; }
  .head { height: 24px; flex: none; display: flex; align-items: center; gap: 6px; padding: 0 4px; background: linear-gradient(90deg, #bfcddb, #d7e4f2); }
  .head.active { background: linear-gradient(90deg, #99b4d1, #b9d1ea); }
  .head h2 { flex: 1; }
  .head button, .head svg { width: 10px; height: 10px; }
  .box { flex: 1; min-height: 0; display: flex; flex-direction: column; background: #fff; border: 1px solid #828790; padding: 1px; }
  .view { flex: 1; min-height: 0; display: flex; overflow: hidden; }
  .tree { flex: 1; min-width: 0; min-height: 0; overflow: hidden; }
  .row { display: flex; align-items: center; height: 22px; white-space: nowrap; padding-left: 2px; }
  .d1 { padding-left: 21px; }
  .d2 { padding-left: 40px; }
  .slot { width: 19px; flex: none; display: flex; justify-content: center; }
  .exp, .exp svg { width: 9px; height: 9px; }
  .lbl { padding: 0 3px; line-height: 22px; }
  .hl { background: #f0f0f0; }
  .bold { font-weight: 700; }
  .scroll { display: flex; background: #f0f0f0; }
  .scroll button { width: 17px; height: 17px; flex: none; }
  .scroll span { flex: 0 1 0; }
  .scroll .thumb { background: #cdcdcd; }
  .scroll.v { width: 17px; flex-direction: column; }
  .scroll.h { height: 17px; flex: none; }
  .scroll.off .chev { color: #bbb; }
  .hrow { background: #f0f0f0; padding-right: 19px; }

  .tools .box { padding: 1px 2px 2px 1px; }
  .mid { display: flex; flex-direction: column; min-height: 0; gap: 5px; }
  .contents { flex: 1; }
  .contents .box { padding: 1px 2px 2px 1px; }
  .results { height: 143px; }
  .ctools { height: 26px; flex: none; display: flex; align-items: center; padding: 0 4px; background: linear-gradient(#fcfcfc, #ececec); }
  .results .row { height: 18px; }
  .results .lbl { line-height: 18px; }
  .results .box { padding-top: 1px; }
  .layers label { display: flex; align-items: center; padding-left: 3px; gap: 5px; }
  .layers input { appearance: none; width: 11px; height: 11px; margin: 0; border: 1px solid #000; background: #fff; display: grid; place-items: center; }
  .layers input:checked::after { content: ''; width: 8px; height: 5px; border: solid #000; border-width: 0 0 2px 2px; transform: rotate(-45deg); margin-bottom: 2px; }
  .layers .lbl { padding: 0 2px; }
  .sel { background: #0078d7; color: #fff; }
  .sub { padding-left: 81px; }
  .leg { padding-left: 57px; gap: 4px; }
  .sw { width: 15px; height: 11px; border: 1px solid #6e6e6e; flex: none; }
  .sw.green { background: #e8fcc8; }
  .sw.blue { background: #bcd0ff; border-color: #000; }
  .sw.shade { box-shadow: 3px 3px #000; }
  .pt { width: 6px; height: 6px; margin-left: 3px; }
  .marked { position: relative; }
  .marked::after { content: ''; position: absolute; left: 22px; top: -8px; width: 121px; height: 35px; border: 2px solid #f00; }

  .mapwrap { display: flex; flex-direction: column; min-height: 0; min-width: 0; border: 1px solid #696969; border-right: 2px solid #e3e3e3; border-bottom: 3px solid #e3e3e3; }
  .mapline { flex: 1; min-height: 0; display: flex; }
  .map { flex: 1; background: #bee8ff; border-bottom: 1px solid #fff; border-right: 1px solid #fff; position: relative; }
  .shape { position: absolute; left: 482px; bottom: 34px; width: 18px; height: 4px; }
  .mapbot { display: flex; align-items: center; height: 17px; padding-right: 20px; }
  .mapbot .scroll { flex: 1; }
  .mapbot .sep { margin: 0 1px; }
  .mini { width: 19px; height: 17px; }
  .mini .ico { width: 10px; height: 10px; }
  .mini.on { background: #c5def5; border: 1px solid #90c8f6; }

  .catalog { background: #fafafa; }
  .cattools { height: 26px; flex: none; display: flex; align-items: center; padding-left: 2px; color: #666; }
  .cattools .tb { width: 24px; }
  .cattools .sep { width: 7px; }
  .loc { height: 28px; flex: none; display: flex; align-items: center; background: #f0f0f0; padding: 0 4px; font-size: 12px; }
  .loc label { width: 59px; }
  .loc .combo { flex: 1; font: 13px/16px 'Open Sans', 'Noto Sans CJK SC', sans-serif; }
  .catalog .box { border-color: #696969 #e3e3e3 #e3e3e3 #696969; margin: 0 4px 0 1px; padding-left: 0; }
  .catalog .row { height: 19px; }
  .catalog .lbl { line-height: 19px; }
  .ctabs { display: flex; height: 28px; flex: none; padding: 4px 2px 3px; border-top: 1px solid #f0f0f0; }
  .ctabs button { width: 55px; gap: 3px; border: 1px solid #999; border-top: 0; border-radius: 0 0 3px 3px; background: #f0f0f0; color: #777; }
  .ctabs .cur { background: #fff; color: #000; }
  footer { height: 23px; padding: 6px 3px 0; line-height: 14px; }

  .dialog { position: absolute; left: 570px; top: 212px; width: 781px; height: 606px; display: flex; flex-direction: column; background: #f0f0f0; border: 1px solid #5c7381; box-shadow: 1px 4px 14px rgba(0, 0, 0, 0.4); }
  .dtitle { height: 32px; flex: none; background: #fff; display: flex; justify-content: space-between; align-items: center; padding: 0 11px 0 8px; }
  .dtitle svg { width: 11px; height: 11px; }
  .tabs { display: flex; align-items: flex-end; height: 36px; flex: none; padding-left: 10px; }
  .tabs button { height: 24px; min-width: 48px; padding: 0 4px 0 7px; justify-content: flex-start; border: 1px solid #d9d9d9; border-width: 1px 1px 0 0; white-space: nowrap; }
  .tabs button:first-child { border-left-width: 1px; padding-left: 5px; }
  .tabs .cur { position: relative; width: 52px; height: 27px; margin: 0 -3px -1px -2px; border-left-width: 1px; background: #fff; padding: 0 0 3px 7px; }
  .tabs .cur::after { content: ''; position: absolute; left: -1px; top: 3px; width: 50px; height: 19px; border: 2px solid #f00; }
  .page { flex: 1; margin: 0 10px 0 8px; border: 1px solid #dcdcdc; background: #fff; padding: 46px 0 0 10px; font-size: 12px; }
  fieldset { width: 567px; border: 1px solid #dcdcdc; margin: 0 0 9px; padding: 0; }
  legend { height: 12px; line-height: 12px; margin-left: 4px; padding: 0 3px; }
  .grid { display: grid; grid-template-columns: 165px 164px 1fr; grid-auto-rows: 14px; row-gap: 8px; padding: 0 0 10px 30px; }
  .grid label { display: flex; align-items: center; gap: 9px; white-space: nowrap; }
  .grid input { border: 0; padding: 0; width: 130px; height: 14px; background: none; line-height: 14px; }
  .grid .left { grid-area: 2 / 1; gap: 4px; }
  .grid .left input { background: #0078d7; color: #fff; width: 103px; }
  .grid .top { grid-area: 1 / 2; }
  .grid .right { grid-area: 2 / 3; }
  .grid .bottom { grid-area: 3 / 2; }
  .src { margin: 0; }
  .text { margin: 8px 11px 10px 18px; height: 165px; border: 1px solid #7a7a7a; padding: 1px; display: flex; flex-direction: column; position: relative; }
  .text::after { content: ''; position: absolute; left: 2px; top: 2px; width: 416px; height: 145px; border: 2px solid #f00; }
  .text .view { display: flex; justify-content: space-between; }
  table { border-collapse: collapse; margin: 2px 0 0 4px; align-self: flex-start; }
  td { padding: 0; height: 14px; line-height: 14px; white-space: nowrap; }
  td:first-child { width: 193px; }
  .btn { background: #e1e1e1; border: 1px solid #adadad; width: 98px; height: 31px; }
  .src .btn { width: 149px; height: 23px; margin: 0 12px 6px auto; }
  .actions { height: 53px; flex: none; display: flex; justify-content: flex-end; gap: 10px; padding: 11px 9px 0 0; }
  .btn.ok { border: 2px solid #0078d7; }
  .btn:disabled { background: #ccc; border-color: #bfbfbf; color: #838383; }

  .meter { position: absolute; right: 0; top: 886px; width: 10px; height: 59px; background: #555b6b; border: 1px solid #3a3f4c; border-right: 0; border-radius: 4px 0 0 4px; padding: 6px 0 0 3px; }
  .meter svg { width: 4px; height: 46px; }
  .mark { position: absolute; right: 9px; bottom: 8px; font: 16px/20px 'Liberation Sans', sans-serif; color: #e8e8e8; text-shadow: 1px 1px #c4c4c4; }
</style>
